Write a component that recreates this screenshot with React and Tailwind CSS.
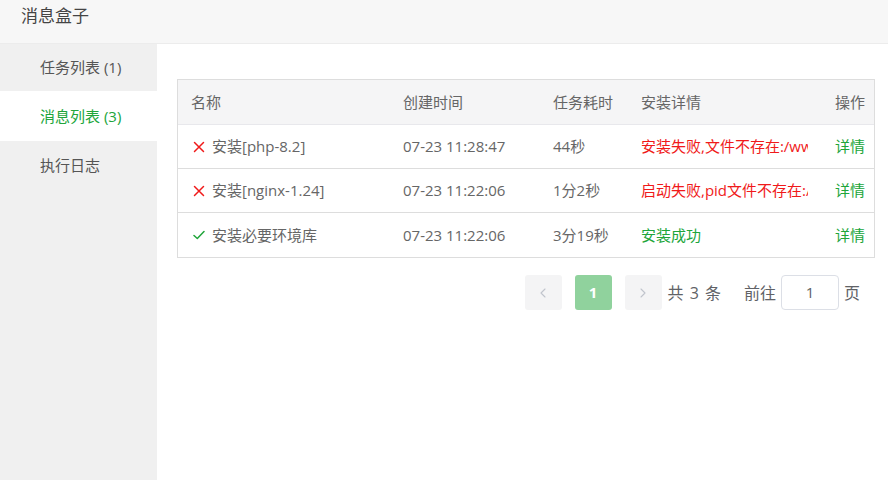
import { ChevronLeft, ChevronRight } from 'lucide-react';

const rows = [
  { ok: false, name: '安装[php-8.2]', time: '07-23 11:28:47', cost: '44秒', detail: '安装失败,文件不存在:/www/server/php/82/bin/php' },
  { ok: false, name: '安装[nginx-1.24]', time: '07-23 11:22:06', cost: '1分2秒', detail: '启动失败,pid文件不存在:/www/server/nginx/logs/nginx.pid' },
  { ok: true, name: '安装必要环境库', time: '07-23 11:22:06', cost: '3分19秒', detail: '安装成功' },
];

const tabs = [
  { label: '任务列表 (1)', active: false, h: 'h-[47px]' },
  { label: '消息列表 (3)', active: true, h: 'h-[50px]' },
  { label: '执行日志', active: false, h: 'h-[48px]' },
];

const CrossIcon = () => (
  <svg width="12" height="12" viewBox="0 0 12 12" className="shrink-0">
    <path d="M1.5 1.5l9 9M10.5 1.5l-9 9" stroke="#f01a1a" strokeWidth="1.5" strokeLinecap="round" />
  </svg>
);

const CheckIcon = () => (
  <svg width="12" height="12" viewBox="0 0 12 12" className="shrink-0">
    <path d="M1 6.5l3.3 3L11 2.5" stroke="#20a53a" strokeWidth="1.5" fill="none" strokeLinecap="round" strokeLinejoin="round" />
  </svg>
);

const App = () => {
  return (
    <div
      className="w-[888px] h-[480px] flex flex-col bg-white text-[15px] text-[#666] overflow-hidden"
      style={{ fontFamily: '"Open Sans", "Noto Sans CJK SC", sans-serif' }}
    >
      {/* Header */}
      <div className="h-[44px] shrink-0 px-[21px] pt-[4px] leading-[24px] bg-[#f7f7f7] border-b border-[#ececec] text-[17px] text-[#444]">
        消息盒子
      </div>

      <div className="flex flex-1 min-h-0">
        {/* Sidebar */}
        <div className="w-[157px] shrink-0 bg-[#f0f0f0] flex flex-col">
          {tabs.map((t) => (
            <div
              key={t.label}
              className={`${t.h} flex items-center pl-[40px] ${t.active ? 'bg-white text-[#20a53a]' : 'text-[#555]'}`}
            >
              {t.label}
            </div>
          ))}
        </div>

        {/* Content */}
        <div className="flex-1 pl-[20px] pr-[13px] pt-[35px]">
          <div className="border border-[#ddd]">
            <div className="grid grid-cols-[212px_150px_88px_194px_1fr] h-[45px] items-center bg-[#f5f5f6] border-b border-[#e8e8ec]">
              <div className="pl-[13px]">名称</div>
              <div className="pl-[13px]">创建时间</div>
              <div className="pl-[13px]">任务耗时</div>
              <div className="pl-[13px]">安装详情</div>
              <div className="pl-[13px]">操作</div>
            </div>
            {rows.map((r, i) => (
              <div
                key={i}
                className={`grid grid-cols-[212px_150px_88px_194px_1fr] h-[44px] items-center ${i < rows.length - 1 ? 'border-b border-[#ddd]' : ''}`}
              >
                <div className="pl-[15px] flex items-center gap-[7px]">
                  {r.ok ? <CheckIcon /> : <CrossIcon />}
                  <span>{r.name}</span>
                </div>
                <div className="pl-[13px]">{r.time}</div>
                <div className="pl-[13px]">{r.cost}</div>
                <div className="pl-[13px]">
                  <div className={`w-[167px] overflow-hidden whitespace-nowrap ${r.ok ? 'text-[#20a53a]' : 'text-[#f01a1a]'}`}>
                    {r.detail}
                  </div>
                </div>
                <div className="pl-[13px] text-[#20a53a]">详情</div>
              </div>
            ))}
          </div>

          {/* Pagination */}
          <div className="flex items-center justify-end mt-[17px] pr-[15px] text-[16px]">
            <div className="w-[37px] h-[35px] rounded-[3px] bg-[#f4f4f5] flex items-center justify-center text-[#c0c4cc]">
              <ChevronLeft size={16} strokeWidth={1.6} />
            </div>
            <div className="w-[37px] h-[35px] ml-[13px] rounded-[3px] bg-[#90d29d] flex items-center justify-center text-white font-bold text-[15px]">
              1
            </div>
            <div className="w-[37px] h-[35px] ml-[13px] rounded-[3px] bg-[#f4f4f5] flex items-center justify-center text-[#c0c4cc]">
              <ChevronRight size={16} strokeWidth={1.6} />
            </div>
            <span className="ml-[6px] text-[#606266] tracking-[1px]">共 3 条</span>
            <span className="ml-[22px] text-[#606266]">前往</span>
            <div className="ml-[5px] w-[58px] h-[35px] border border-[#dcdfe6] rounded-[4px] flex items-center justify-center text-[#606266] text-[15px]">
              1
            </div>
            <span className="ml-[5px] text-[#606266]">页</span>
          </div>
        </div>
      </div>
    </div>
  );
};

export default App;
